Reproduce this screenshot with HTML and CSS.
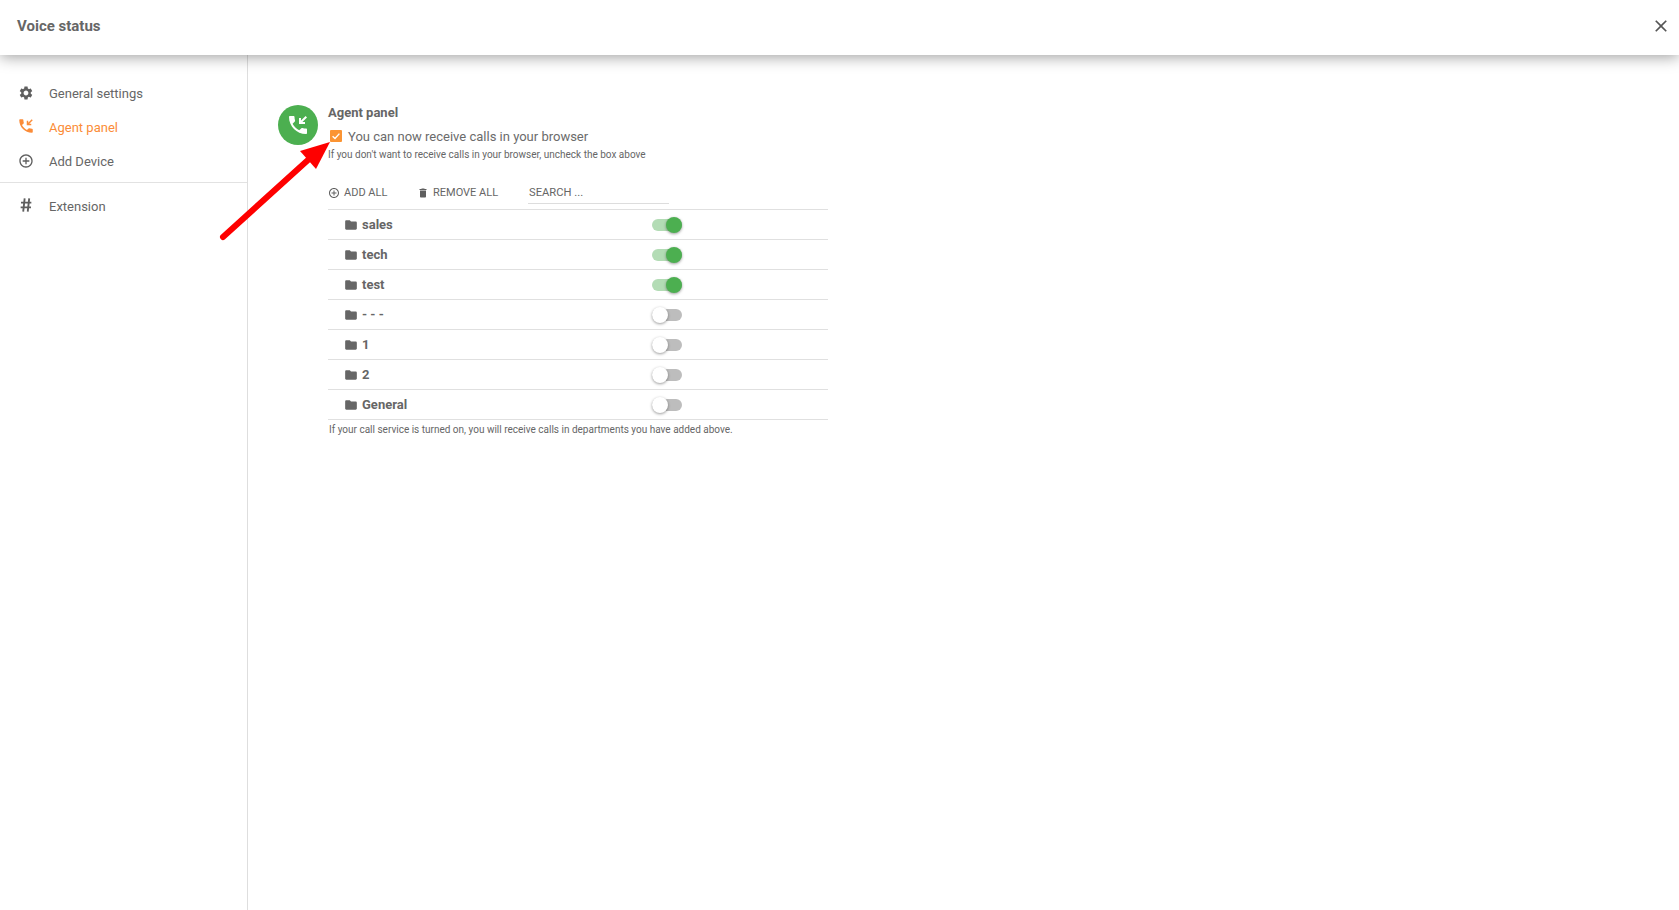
FILE: index.html
```
<!DOCTYPE html>
<html lang="en">
<head>
<meta charset="utf-8">
<title>Voice status</title>
<link rel="stylesheet" href="styles.css">
</head>
<body>
<svg class="sprite" aria-hidden="true">
  <symbol id="i-gear" viewBox="0 0 24 24"><path d="M19.14 12.94c.04-.3.06-.61.06-.94 0-.32-.02-.64-.07-.94l2.03-1.58c.18-.14.23-.41.12-.61l-1.92-3.32c-.12-.22-.37-.29-.59-.22l-2.39.96c-.5-.38-1.03-.7-1.62-.94l-.36-2.54c-.04-.24-.24-.41-.48-.41h-3.84c-.24 0-.43.17-.47.41l-.36 2.54c-.59.24-1.13.57-1.62.94l-2.39-.96c-.22-.08-.47 0-.59.22L2.74 8.87c-.12.21-.08.47.12.61l2.03 1.58c-.05.3-.09.63-.09.94s.02.64.07.94l-2.03 1.58c-.18.14-.23.41-.12.61l1.92 3.32c.12.22.37.29.59.22l2.39-.96c.5.38 1.03.7 1.62.94l.36 2.54c.05.24.24.41.48.41h3.84c.24 0 .44-.17.47-.41l.36-2.54c.59-.24 1.13-.56 1.62-.94l2.39.96c.22.08.47 0 .59-.22l1.92-3.32c.12-.22.07-.47-.12-.61l-2.01-1.58zM12 15.6c-1.98 0-3.6-1.62-3.6-3.6s1.62-3.6 3.6-3.6 3.6 1.62 3.6 3.6-1.62 3.6-3.6 3.6z"/></symbol>
  <symbol id="i-call" viewBox="0 0 24 24"><path d="M20 15.5c-1.25 0-2.45-.2-3.57-.57-.35-.11-.74-.03-1.02.24l-2.2 2.2c-2.83-1.44-5.15-3.75-6.59-6.59l2.2-2.21c.28-.26.36-.65.25-1C8.7 6.45 8.5 5.25 8.5 4c0-.55-.45-1-1-1H4c-.55 0-1 .45-1 1 0 9.39 7.61 17 17 17 .55 0 1-.45 1-1v-3.5c0-.55-.45-1-1-1zM21 4.41 19.59 3 15 7.59V5h-2v6h6V9h-2.59z"/></symbol>
  <symbol id="i-add" viewBox="0 0 24 24"><path d="M13 7h-2v4H7v2h4v4h2v-4h4v-2h-4V7zm-1-5C6.48 2 2 6.48 2 12s4.48 10 10 10 10-4.48 10-10S17.52 2 12 2zm0 18c-4.41 0-8-3.59-8-8s3.59-8 8-8 8 3.59 8 8-3.59 8-8 8z"/></symbol>
  <symbol id="i-tag" viewBox="0 0 24 24"><path class="tag-lines" d="M10 2 7.800 22M16.800 2 14.600 22M4.500 8.500H20M4 15.500H19.500"/></symbol>
  <symbol id="i-trash" viewBox="0 0 24 24"><path d="M6 19c0 1.1.9 2 2 2h8c1.1 0 2-.9 2-2V7H6v12zM19 4h-3.500l-1-1h-5l-1 1H5v2h14V4z"/></symbol>
  <symbol id="i-folder" viewBox="0 0 24 24"><path d="M10 4H4c-1.1 0-2 .9-2 2v12c0 1.1.9 2 2 2h16c1.1 0 2-.9 2-2V8c0-1.1-.9-2-2-2h-8l-2-2z"/></symbol>
  <symbol id="i-close" viewBox="0 0 24 24"><path d="M19 6.410 17.590 5 12 10.590 6.410 5 5 6.410 10.590 12 5 17.590 6.410 19 12 13.410 17.590 19 19 17.590 13.410 12z"/></symbol>
</svg>

<header class="topbar">
  <h1 class="topbar-title">Voice status</h1>
  <button class="close-btn" aria-label="Close"><svg class="close-icon"><use href="#i-close"/></svg></button>
</header>

<div class="layout">
  <nav class="sidebar">
    <ul class="nav-group">
      <li class="nav-item"><svg class="nav-icon"><use href="#i-gear"/></svg><span>General settings</span></li>
      <li class="nav-item is-active"><svg class="nav-icon"><use href="#i-call"/></svg><span>Agent panel</span></li>
      <li class="nav-item"><svg class="nav-icon"><use href="#i-add"/></svg><span>Add Device</span></li>
    </ul>
    <ul class="nav-group nav-group-second">
      <li class="nav-item"><svg class="nav-icon nav-icon-tag"><use href="#i-tag"/></svg><span>Extension</span></li>
    </ul>
  </nav>

  <main class="panel">
    <div class="avatar"><svg class="avatar-icon"><use href="#i-call"/></svg></div>
    <section class="panel-body">
      <h2 class="panel-title">Agent panel</h2>
      <label class="receive">
        <span class="checkbox"><svg class="check-mark" viewBox="0 0 12 12"><path d="M2.600 6.200 5 8.400 9.400 3.600"/></svg></span>
        <span>You can now receive calls in your browser</span>
      </label>
      <p class="hint">If you don't want to receive calls in your browser, uncheck the box above</p>

      <div class="toolbar">
        <span class="tool tool-add"><svg class="tool-icon"><use href="#i-add"/></svg>ADD ALL</span>
        <span class="tool tool-remove"><svg class="tool-icon"><use href="#i-trash"/></svg>REMOVE ALL</span>
        <span class="search">SEARCH ...</span>
      </div>

      <ul class="dept-list">
        <li class="dept"><svg class="folder"><use href="#i-folder"/></svg><span class="dept-name">sales</span><span class="toggle is-on"></span></li>
        <li class="dept"><svg class="folder"><use href="#i-folder"/></svg><span class="dept-name">tech</span><span class="toggle is-on"></span></li>
        <li class="dept"><svg class="folder"><use href="#i-folder"/></svg><span class="dept-name">test</span><span class="toggle is-on"></span></li>
        <li class="dept"><svg class="folder"><use href="#i-folder"/></svg><span class="dept-name">- - -</span><span class="toggle"></span></li>
        <li class="dept"><svg class="folder"><use href="#i-folder"/></svg><span class="dept-name">1</span><span class="toggle"></span></li>
        <li class="dept"><svg class="folder"><use href="#i-folder"/></svg><span class="dept-name">2</span><span class="toggle"></span></li>
        <li class="dept"><svg class="folder"><use href="#i-folder"/></svg><span class="dept-name">General</span><span class="toggle"></span></li>
      </ul>
      <p class="note">If your call service is turned on, you will receive calls in departments you have added above.</p>
    </section>
  </main>
</div>

<svg class="arrow" viewBox="0 0 1679 910" aria-hidden="true">
  <path class="arrow-shaft" d="M223 237 308 160"/>
  <path class="arrow-head" d="M330 142 300 151 316 169z"/>
</svg>
</body>
</html>
```

FILE: styles.css
```
* { box-sizing: border-box; }
html, body { height: 100%; }
body {
  margin: 0;
  height: 910px;
  overflow: hidden;
  display: flex;
  flex-direction: column;
  background: #fff;
  color: #666;
  font-family: Roboto, "Liberation Sans", sans-serif;
  position: relative;
}
ul { list-style: none; margin: 0; padding: 0; }
p, h1, h2 { margin: 0; }
.sprite { display: none; }
svg { fill: currentColor; flex: none; }
.tag-lines { fill: none; stroke: currentColor; stroke-width: 2.8; }

.topbar {
  height: 55px;
  flex: none;
  display: flex;
  align-items: center;
  justify-content: space-between;
  padding: 0 8px 4px 17px;
  background: #fff;
  box-shadow: 0 2px 14px rgba(0, 0, 0, .38);
  position: relative;
  z-index: 2;
}
.topbar-title { font-size: 15px; font-weight: 700; color: #666; }
.close-btn { border: 0; padding: 0; background: none; color: #555; display: flex; }
.close-icon { width: 20px; height: 20px; }

.layout { flex: 1; display: flex; min-height: 0; }
.sidebar { width: 248px; flex: none; border-right: 1px solid #dedede; padding-top: 21px; }
.nav-group { padding-bottom: 4px; }
.nav-group-second { border-top: 1px solid #e2e2e2; padding-top: 6px; }
.nav-item {
  height: 34px;
  display: flex;
  align-items: center;
  padding-left: 18px;
  font-size: 13px;
  color: #666;
}
.nav-icon { width: 16px; height: 16px; margin: -1px 15px 0 0; color: #5f5f5f; }
.nav-icon-tag { margin-top: -2px; }
.is-active, .is-active .nav-icon { color: #fb8c38; }
.is-active .nav-icon { width: 18px; height: 18px; margin: -2px 14px 0 -1px; }

.panel { flex: 1; display: flex; align-items: flex-start; padding: 50px 0 0 30px; }
.avatar {
  width: 40px;
  height: 40px;
  border-radius: 50%;
  background: #4caf50;
  color: #fff;
  display: flex;
  align-items: center;
  justify-content: center;
  flex: none;
}
.avatar-icon { width: 24px; height: 24px; }

.panel-body { width: 500px; margin-left: 10px; }
.panel-title { font-size: 13px; font-weight: 700; line-height: 15px; color: #666; }
.receive { display: flex; align-items: center; font-size: 13px; color: #6b6b6b; margin-top: 8px; height: 16px; }
.checkbox {
  width: 12px;
  height: 12px;
  margin: 0 6px 0 2px;
  background: #fb9433;
  border-radius: 1px;
  display: flex;
}
.check-mark { width: 12px; height: 12px; fill: none; stroke: #fff; stroke-width: 1.4; }
.hint { font-size: 10px; line-height: 12px; margin-top: 5px; color: #666; }

.toolbar { display: flex; align-items: flex-start; height: 22px; margin-top: 21px; font-size: 11px; color: #666; }
.tool { display: flex; align-items: center; height: 21px; }
.tool-icon { width: 12px; height: 12px; margin-right: 4px; color: #5f5f5f; }
.tool-add { width: 90px; }
.tool-remove { width: 110px; margin-left: -1px; margin-right: 1px; }
.search { width: 141px; height: 22px; padding-left: 1px; font-size: 11.2px; line-height: 21px; border-bottom: 1px solid #ddd; }

.dept-list { margin-top: 5px; border-top: 1px solid #e0e0e0; }
.dept {
  height: 30px;
  display: flex;
  align-items: center;
  padding-left: 16px;
  border-bottom: 1px solid #e0e0e0;
}
.folder { width: 14px; height: 14px; color: #666; margin-right: 4px; }
.dept-name { font-size: 13px; font-weight: 700; color: #666; width: 290px; }
.toggle { width: 30px; height: 12px; border-radius: 6px; background: #bdbdbd; position: relative; display: block; }
.toggle::after {
  content: "";
  position: absolute;
  top: -2px;
  left: 0;
  width: 16px;
  height: 16px;
  border-radius: 50%;
  background: #fff;
  box-shadow: 0 1px 3px rgba(0, 0, 0, .4);
}
.toggle.is-on { background: #b3dcb5; }
.toggle.is-on::after { left: 14px; background: #4caf50; }
.note { font-size: 10px; line-height: 12px; margin-top: 4px; padding-left: 1px; color: #666; }

.arrow { position: absolute; inset: 0; width: 1679px; height: 910px; z-index: 3; pointer-events: none; }
.arrow-shaft { fill: none; stroke: #fe0000; stroke-width: 6; stroke-linecap: round; }
.arrow-head { fill: #fe0000; }
```
